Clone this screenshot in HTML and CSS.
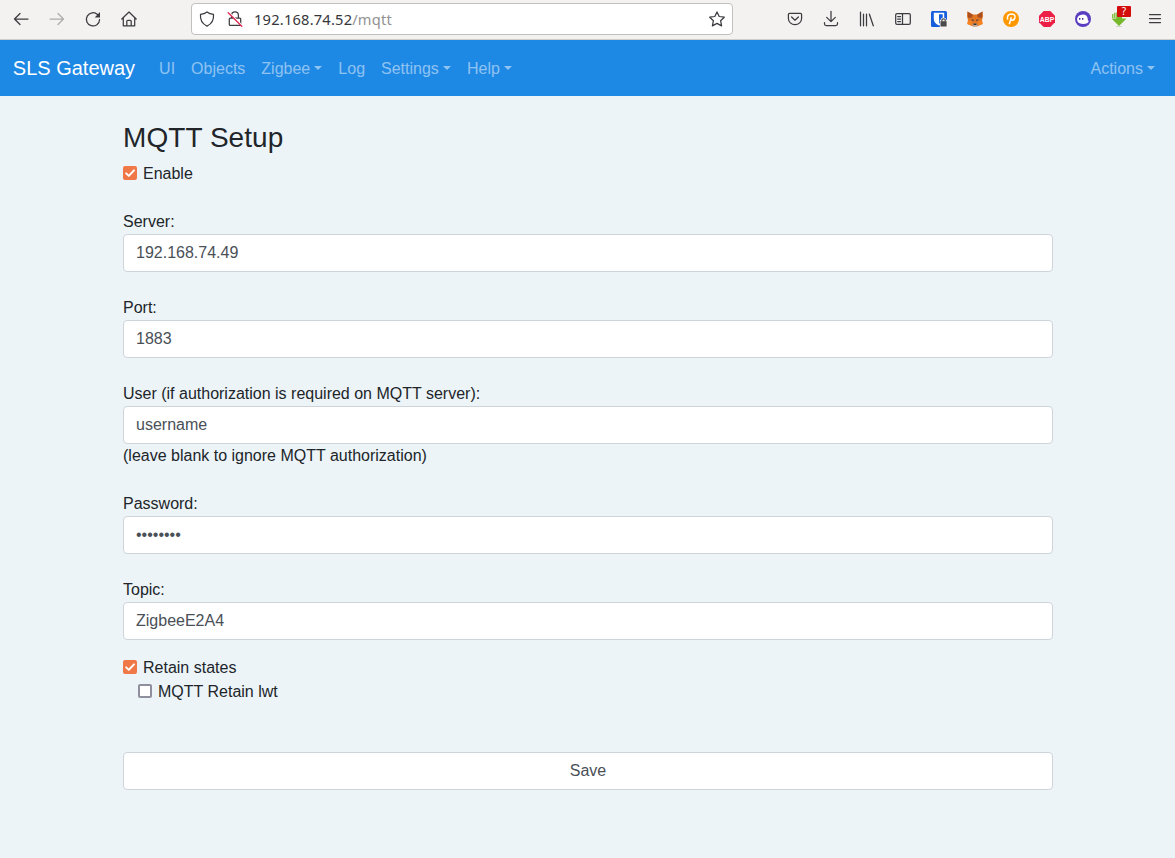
FILE: index.html
```html
<!DOCTYPE html>
<html lang="en">
<head>
<meta charset="utf-8">
<title>SLS Gateway</title>
<link rel="stylesheet" href="styles.css">
</head>
<body>
<header class="toolbar">
  <div class="nav-buttons">
    <svg class="icon" viewBox="0 0 16 16"><path d="M15 8H1.500M7 2.500L1.500 8L7 13.500"/></svg>
    <svg class="icon icon-disabled" viewBox="0 0 16 16"><path d="M1 8H14.500M9 2.500L14.500 8L9 13.500"/></svg>
    <svg class="icon" viewBox="0 0 16 16"><path d="M14.600 8.500A6.600 6.600 0 1 1 12.500 3.500"/><path class="solid" d="M15 1V6.500H9.700Z"/></svg>
    <svg class="icon" viewBox="0 0 16 16"><path d="M.8 8L8 1L15.200 8M2.300 6.700V14.800H5.800V10.300Q5.800 9.300 6.800 9.300H9.200Q10.200 9.300 10.200 10.300V14.800H13.700V6.700M5.800 14.800H10.200"/></svg>
  </div>
  <div class="urlbar">
    <svg class="icon" viewBox="0 0 16 16"><path d="M8 .9Q10.500 2.800 14.500 3.400Q15.300 11.700 8 15.100Q.7 11.700 1.500 3.400Q5.500 2.800 8 .9Z"/></svg>
    <svg class="icon lock" viewBox="0 0 16 16"><path d="M4.600 7V4.200Q4.600.9 8 .9T11.400 4.200V7M3.300 7H12.700Q13.700 7 13.700 8V13.400Q13.700 14.400 12.700 14.400H3.300Q2.300 14.400 2.300 13.400V8Q2.300 7 3.300 7Z"/><path class="slash-gap" d="M2.300 1.800L15.500 14.800"/><path class="slash" d="M1.200 1.800L14.800 15.300"/></svg>
    <span class="url"><span class="host">192.168.74.52</span>/mqtt</span>
    <svg class="icon star" viewBox="0 0 16 16"><path d="M8 .9L10.200 5.500L15.300 6.200L11.600 9.700L12.600 14.900L8 12.400L3.400 14.900L4.400 9.700L.7 6.200L5.800 5.500Z"/></svg>
  </div>
  <div class="extensions">
    <svg class="icon" viewBox="0 0 16 16"><path d="M2.700 2.300H13.300Q14.600 2.300 14.600 3.600V7.500A6.600 6.200 0 0 1 1.400 7.500V3.600Q1.400 2.300 2.700 2.300ZM4.600 6L8 9.200L11.400 6"/></svg>
    <svg class="icon" viewBox="0 0 16 16"><path d="M8 .3V10.500M3.700 6.400L8 10.600L12.300 6.400M1.500 11.500V12.700Q1.500 14.500 3.300 14.500H12.700Q14.500 14.500 14.500 12.700V11.500"/></svg>
    <svg class="icon" viewBox="0 0 16 16"><path d="M1.500 1.200V14.800M4.500 3.200V14.800M7.500 3.200V14.800M10.400 3.200L14.300 14.800"/></svg>
    <svg class="icon" viewBox="0 0 16 16"><path d="M2 2.600H14Q15.300 2.600 15.300 3.900V12.100Q15.300 13.400 14 13.400H2Q.7 13.400 .7 12.100V3.900Q.7 2.600 2 2.600ZM7.500 2.600V13.400M2.700 5.500H5.500M2.700 8H5.500M2.700 10.500H5.500"/></svg>
    <svg class="badge-icon" viewBox="0 0 16 16"><rect width="16" height="16" rx="1.500" fill="#175ddc"/><path d="M2.800 1.700H13.200V8Q13.200 12 8 14.600Q2.800 12 2.800 8Z" fill="#fff"/><path d="M8 3.200H11.700V8Q11.700 10.800 8 12.700Z" fill="#175ddc"/><path d="M8.800 8.800H10V7.500Q10.500 6.700 12.500 6.700T15 7.500V8.800H16V16H8.800Z" fill="#f3f2f0"/><path d="M9.500 10.200H15.600V15.500H9.500Z" fill="#4a4a4a"/><path d="M10.900 10.500V9.200Q10.900 7.800 12.550 7.800T14.200 9.200V10.500" fill="none" stroke="#4a4a4a" stroke-width="1.200"/></svg>
    <svg class="badge-icon" viewBox="0 0 16 16"><path d="M.5 .5L6 3.500H10L15.500 .5L16 5L15 9.500L15.600 13L12 14.500L10 15.500H6L4 14.500L.4 13L1 9.500L0 5Z" fill="#e27625"/><path d="M.5 .5L6 4L5 6.500L1 7ZM15.500 .5L10 4L11 6.500L15 7Z" fill="#a94f20"/><path d="M1 9.500L5.500 10.500L4 14.500L.4 13ZM15 9.500L10.500 10.500L12 14.500L15.600 13Z" fill="#f5841f"/><path d="M4 8.500L6.700 8.700L6.400 10.200ZM12 8.500L9.300 8.700L9.600 10.200Z" fill="#233447"/><path d="M5.500 13L7 12.500H9L10.500 13L10 15.500H6Z" fill="#c0ad9e"/><path d="M6.500 12.500H9.500V14H6.500Z" fill="#333"/></svg>
    <svg class="badge-icon" viewBox="0 0 16 16"><circle cx="8" cy="8" r="8" fill="#ff9800"/><path d="M6.300 13.300L8.300 6.300M4.600 8.700Q3.500 3.200 8.600 3Q12.700 3.200 11.900 6.700Q11 9.800 7.700 9.300" fill="none" stroke="#fff" stroke-width="1.500"/></svg>
    <svg class="badge-icon" viewBox="0 0 16 16"><path d="M4.700 0H11.300L16 4.700V11.300L11.300 16H4.700L0 11.300V4.700Z" fill="#ed1e45"/><text class="abp" transform="translate(8 10.900) scale(.86 1)">ABP</text></svg>
    <svg class="badge-icon" viewBox="0 0 16 16"><circle cx="8" cy="8" r="8" fill="#5a3dc0"/><path d="M2 8.200Q2.200 12.600 7.800 13Q13.300 12.800 13.800 10Q12.500 9.500 12.700 7.500Q12 3.800 8 3.600Q2.700 4 2 8.200Z" fill="#fff"/><path d="M4.700 7V8.800M7.700 7V8.800" stroke="#47309e" stroke-width="1.400"/></svg>
    <span class="download-helper">
      <svg class="badge-icon" viewBox="0 0 16 16"><path d="M5.200 1.500H11V7.500H15.500L8 15L.5 7.500H5.200Z" fill="#76b82a"/><path d="M3.800 1.700V7M1.800 3V7" stroke="#76b82a" stroke-width="1.300"/><path d="M5 15.500H11" stroke="#d2d2d0"/></svg>
      <span class="count">?</span>
    </span>
    <svg class="icon" viewBox="0 0 16 16"><path d="M2.500 3.500H13.500M2.500 7.500H13.500M2.500 11.500H13.500"/></svg>
  </div>
</header>
<nav class="navbar">
  <a class="brand">SLS Gateway</a>
  <a class="nav-link">UI</a>
  <a class="nav-link">Objects</a>
  <a class="nav-link dropdown">Zigbee</a>
  <a class="nav-link">Log</a>
  <a class="nav-link dropdown">Settings</a>
  <a class="nav-link dropdown">Help</a>
  <a class="nav-link dropdown nav-end">Actions</a>
</nav>
<main class="container">
  <h3 class="title">MQTT Setup</h3>
  <label class="check"><span class="box box-on"><svg viewBox="0 0 14 14"><path d="M3.200 7.400L5.800 9.900L11 4.400"/></svg></span>Enable</label>
  <form class="form">
    <div class="field"><label for="server">Server:</label><input class="control" id="server" value="192.168.74.49"></div>
    <div class="field"><label for="port">Port:</label><input class="control" id="port" value="1883"></div>
    <div class="field"><label for="user">User (if authorization is required on MQTT server):</label><input class="control" id="user" value="username"><span>(leave blank to ignore MQTT authorization)</span></div>
    <div class="field"><label for="password">Password:</label><input class="control" id="password" type="password" value="username"></div>
    <div class="field"><label for="topic">Topic:</label><input class="control" id="topic" value="ZigbeeE2A4"></div>
  </form>
  <div class="options">
    <label class="check"><span class="box box-on"><svg viewBox="0 0 14 14"><path d="M3.200 7.400L5.800 9.900L11 4.400"/></svg></span>Retain states</label>
    <label class="check check-nested"><span class="box"></span>MQTT Retain lwt</label>
  </div>
  <button class="control save">Save</button>
</main>
</body>
</html>
```
FILE: styles.css
```css
* { box-sizing: border-box; }
body {
  margin: 0;
  min-height: 100vh;
  background: #ecf4f8;
  color: #212529;
  font: 16px/24px "Liberation Sans", Arial, sans-serif;
}
.toolbar {
  display: flex;
  align-items: center;
  height: 40px;
  padding: 0 12px 2px 13px;
  background: #f3f2f0;
  border-bottom: 1px solid #cfcdca;
}
.nav-buttons, .extensions { display: flex; gap: 20px; }
.icon, .badge-icon { display: block; width: 16px; height: 16px; flex: none; overflow: visible; }
.icon { fill: none; stroke: #3c3c41; stroke-width: 1.25; stroke-linejoin: round; stroke-linecap: round; }
.icon .solid { fill: #3c3c41; stroke: none; }
.icon-disabled { stroke: #adacac; }
.urlbar {
  display: flex;
  align-items: center;
  width: 542px;
  height: 32px;
  margin-left: 54px;
  padding: 0 7px;
  background: #fff;
  border: 1px solid #c2c0bd;
  border-radius: 4px;
}
.lock { margin-left: 12px; }
.icon .slash-gap { stroke: #fff; stroke-width: 1.3; }
.icon .slash { stroke: #e22850; stroke-width: 1.3; }
.url {
  margin-left: 11px;
  color: #929292;
  font: 14.67px/20px "Noto Sans", "Open Sans", sans-serif;
  letter-spacing: .2px;
}
.host { color: #36363a; }
.star { margin-left: auto; }
.extensions { margin-left: auto; }
.abp { fill: #fff; font: bold 8px "Liberation Sans", sans-serif; text-anchor: middle; }
.download-helper { position: relative; }
.count {
  position: absolute;
  top: -5px;
  left: 6px;
  width: 14px;
  height: 11px;
  border-radius: 1px;
  background: #d30b0b;
  color: #fff;
  font: 10px/11px "Noto Sans", sans-serif;
  text-align: center;
}
.navbar {
  display: flex;
  align-items: center;
  height: 56px;
  padding: 0 12px 0 12.8px;
  background: #1e88e5;
}
.brand { margin-right: 16px; color: #fff; font-size: 20px; line-height: 30px; }
.nav-link { padding: 9px 8px 7px; color: rgba(255, 255, 255, .5); white-space: nowrap; }
.nav-end { margin-left: auto; }
.dropdown::after {
  content: "";
  display: inline-block;
  margin-left: .255em;
  vertical-align: .255em;
  border-top: .3em solid;
  border-right: .3em solid transparent;
  border-left: .3em solid transparent;
}
.container { width: 961px; margin: 0 auto; padding: 24.6px 15px 0 16px; }
.title { margin: 0 0 7.4px; font-size: 28px; font-weight: 400; line-height: 33.6px; letter-spacing: .06px; }
.check { display: flex; align-items: center; gap: 6px; }
.check-nested { margin-left: 15px; }
.box { width: 14px; height: 14px; margin-bottom: 1.2px; border: 2px solid #8f8f9d; border-radius: 2px; background: #fff; }
.box-on { border: 0; background: #f07746; }
.box svg { display: block; fill: none; stroke: #fff; stroke-width: 2; stroke-linecap: round; stroke-linejoin: round; }
.form { display: flex; flex-direction: column; gap: 24px; margin-top: 24px; }
.field { display: flex; flex-direction: column; }
.control {
  display: block;
  width: 100%;
  height: 38px;
  padding: 6px 12px;
  border: 1px solid #ced4da;
  border-radius: 4px;
  background: #fff;
  color: #495057;
  font: inherit;
}
.options { margin-top: 16px; }
.save { margin-top: 48px; }
```
